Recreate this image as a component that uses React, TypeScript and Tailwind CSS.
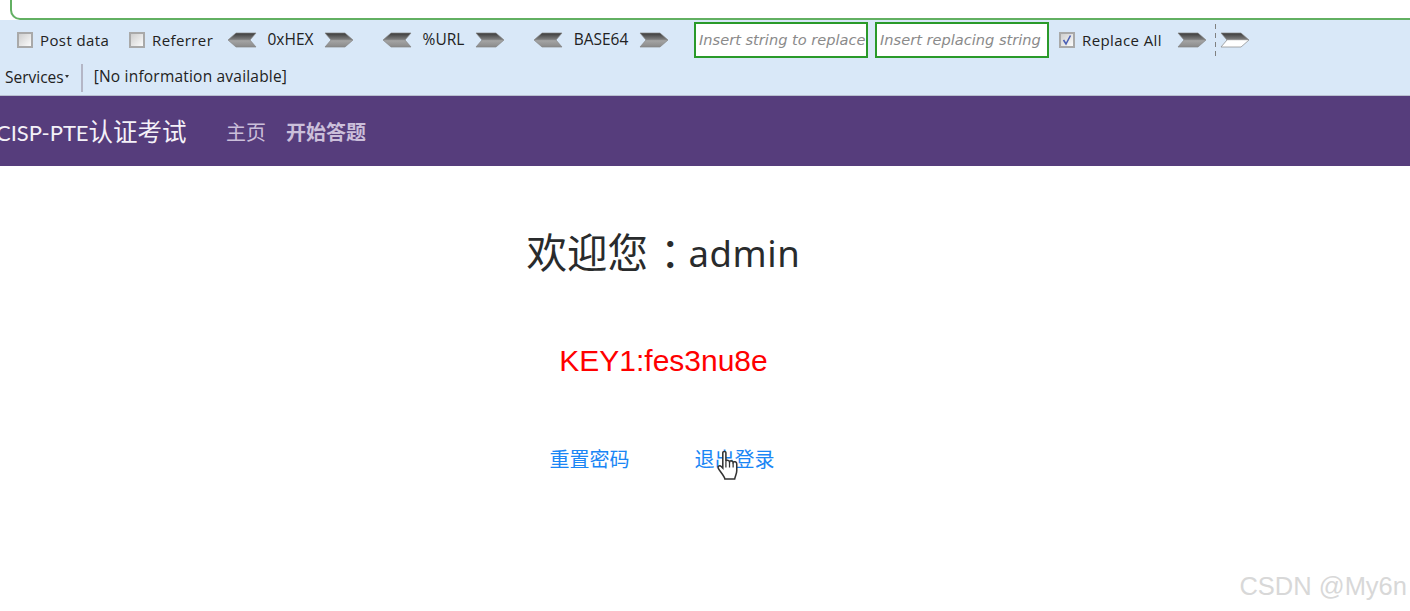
import { useId } from 'react';

const ui = "font-['Open_Sans','Noto_Sans_CJK_SC',sans-serif]";

function Chevron({ dir, light }: { dir: 'left' | 'right'; light?: boolean }) {
  const id = useId();
  return (
    <svg width="30" height="16" viewBox="0 0 30 16" className="shrink-0">
      <defs>
        <linearGradient id={id} x1="0" y1="0" x2="0" y2="1">
          <stop offset="0" stopColor="#3a3a3a" />
          <stop offset="0.45" stopColor="#7c7c7c" />
          <stop offset="0.55" stopColor={light ? '#ffffff' : '#a4a4a4'} />
          <stop offset="1" stopColor={light ? '#ffffff' : '#8a8a8a'} />
        </linearGradient>
      </defs>
      <path
        d={dir === 'right' ? 'M1 1H21L29 8L21 15H1L7 8Z' : 'M29 1H9L1 8L9 15H29L23 8Z'}
        fill={`url(#${id})`}
        stroke="#858585"
        strokeWidth="0.7"
      />
    </svg>
  );
}

function Check({ label, checked, className }: { label: string; checked?: boolean; className?: string }) {
  return (
    <div className={`flex items-center gap-[7px] ${className ?? ''}`}>
      <span className="w-[16px] h-[16px] border-2 border-[#a9a9a9] bg-gradient-to-br from-[#cfcfcf] to-[#fbfbfb] flex items-center justify-center">
        {checked && (
          <svg width="12" height="12" viewBox="0 0 12 12">
            <path d="M2.5 6L5 10L9.5 1.5" fill="none" stroke="#4a5fb5" strokeWidth="1.6" />
          </svg>
        )}
      </span>
      <span className="text-[15px] text-[#222] tracking-[0.4px]">{label}</span>
    </div>
  );
}

function Encoder({ label, className, w }: { label: string; className: string; w: string }) {
  return (
    <div className={`flex items-center ${className}`}>
      <Chevron dir="left" />
      <span className={`text-[15.5px] mt-[-1px] text-[#222] text-center ${w}`}>{label}</span>
      <Chevron dir="right" />
    </div>
  );
}

function Replace({ text, className }: { text: string; className: string }) {
  return (
    <div className={`h-[36px] border-2 border-[#2a9a2a] bg-white pl-[3px] flex items-center overflow-hidden whitespace-nowrap ${className}`}>
      <span className="text-[14.6px] italic text-[#8a8a8a] font-['DejaVu_Sans',sans-serif]">{text}</span>
    </div>
  );
}

export default function App() {
  return (
    <div className={`relative w-[1410px] h-[611px] overflow-hidden bg-white ${ui}`}>
      <div className="pl-[10px] h-[20px]">
        <div className="h-[20px] bg-white border-l-2 border-b-2 border-[#62b062] rounded-bl-[10px]" />
      </div>

      <div className="h-[76px] bg-[#d9e8f8] border-b border-[#b9bfd0]">
        <div className="h-[40px] flex items-center pl-[17px]">
          <Check label="Post data" className="w-[112px]" />
          <Check label="Referrer" className="w-[98px]" />
          <Encoder label="0xHEX" w="w-[67px]" className="w-[155px]" />
          <Encoder label="%URL" w="w-[63px]" className="w-[151px]" />
          <Encoder label="BASE64" w="w-[76px]" className="w-[161px]" />
          <Replace text="Insert string to replace" className="w-[174px]" />
          <Replace text="Insert replacing string" className="w-[174px] ml-[7px]" />
          <Check label="Replace All" checked className="ml-[10px] w-[118px]" />
          <Chevron dir="right" />
          <div className="h-[32px] w-[1px] ml-[8px] mr-[4px] bg-[repeating-linear-gradient(#808080_0_5px,transparent_5px_9px)]" />
          <Chevron dir="right" light />
        </div>
        <div className="h-[35px] flex items-center pl-[5px] text-[15.5px] text-[#222]">
          <span>Services</span>
          <span className="w-0 h-0 border-x-[2px] border-x-transparent border-t-[3px] border-t-[#333] ml-[1px] mt-[-2px]" />
          <div className="h-[28px] w-[2px] bg-[#b4b6c6] ml-[12px] mr-[11px]" />
          <span className="tracking-[0.2px] mt-[-1px]">[No information available]</span>
        </div>
      </div>

      <nav className="h-[70px] pt-[3px] bg-[#563d7c] flex items-center font-['Liberation_Sans','Noto_Sans_CJK_SC',sans-serif]">
        <span className="text-[24.5px] text-[#f4f1f8] -ml-[4px] w-[230px] whitespace-nowrap font-['Lato','Noto_Sans_CJK_SC',sans-serif]">
          <span className="text-[22px]">CISP-PTE</span>认证考试
        </span>
        <a className="text-[20px] text-[#cbbfda] w-[60px]">主页</a>
        <a className="text-[20px] text-[#cbbfda] font-bold">开始答题</a>
      </nav>

      <main className="flex flex-col items-center pr-[83px] font-['Noto_Sans','Noto_Sans_CJK_SC',sans-serif]">
        <h1 className="mt-[59px] flex items-center h-[56px] text-[40.5px] text-[#292b2c] font-normal">
          <span>欢迎您</span>
          <span className="ml-[2px] mr-[-2px] font-['Noto_Sans_CJK_TC',sans-serif]">：</span>
          <span className="text-[36.5px] tracking-[0.6px]">admin</span>
        </h1>
        <p className="mt-[60px] text-[30px] leading-[40px] text-[#ff0000] font-['Liberation_Sans',sans-serif]">KEY1:fes3nu8e</p>
        <div className="mt-[65px] mr-[3px] flex gap-[65px] text-[20px] leading-[28px] text-[#1a86f5]">
          <a>重置密码</a>
          <a>退出登录</a>
        </div>
      </main>

      {/* hand cursor over the logout link */}
      <svg width="26" height="31" viewBox="0 0 24 30" className="absolute left-[716px] top-[450px]">
        <path
          d="M6 2.5C6 1 9 1 9 2.5V11C9.5 9.5 12 9.5 12.5 11.5C13 10 15.5 10.2 16 12C16.8 10.8 19.5 11.2 19.5 13.5V20C19.5 23 18 25 17.5 28H8C7.5 25 2.5 20 1.5 17.5C1 15.5 3 14.5 4.5 16L6 17.5Z"
          fill="#fff"
          stroke="#333"
          strokeWidth="1.5"
        />
        <path d="M9 11V17M12.5 11.5V17M16 12V17" stroke="#333" strokeWidth="1.2" />
      </svg>

      <div className="absolute right-[3px] top-[569px] text-[25.5px] leading-[34px] text-[#d8d8d8] font-['Liberation_Sans',sans-serif]">CSDN @My6n</div>
    </div>
  );
}
